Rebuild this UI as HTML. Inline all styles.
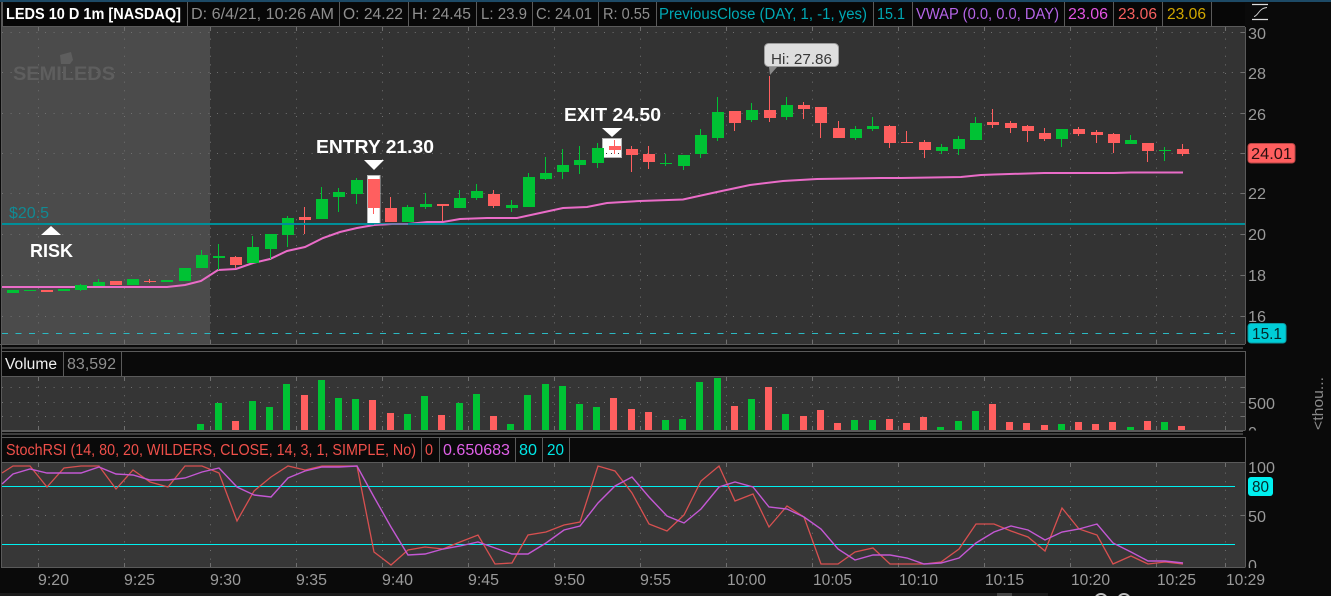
<!DOCTYPE html>
<html lang="en">
<head>
<meta charset="utf-8">
<title>LEDS 10 D 1m</title>
<style>
html,body{margin:0;padding:0;background:#0a0a0a;width:1331px;height:596px;overflow:hidden}
svg{display:block;position:absolute;left:0;top:0}
text{font-family:"Liberation Sans",sans-serif;font-size:15.5px}
.g{fill:#8f8f8f}
.ax{fill:#9a9a9a;font-size:16px}
.b{font-weight:bold;fill:#fff;font-size:18.5px}
.sep{stroke:#5a5a5a;stroke-width:1}
.dot{stroke:#707070;stroke-width:1;stroke-dasharray:1 7.6;fill:none}
.tick{stroke:#6f6f6f;stroke-width:1}
</style>
</head>
<body>
<svg width="1331" height="596" viewBox="0 0 1331 596" xmlns="http://www.w3.org/2000/svg">
<rect width="1331" height="596" fill="#0a0a0a"/>
<rect x="0" y="0" width="1331" height="2" fill="#1d4a66"/>

<!-- main panel -->
<rect x="2" y="27" width="1243" height="317" fill="#333333"/>
<rect x="2" y="27" width="208" height="317" fill="#4b4b4b"/>

<!-- main grid -->
<g class="dot">
<path d="M2 32.5H1245M2 72.5H1245M2 113.5H1245M2 153.5H1245M2 193.5H1245M2 234.5H1245M2 275.5H1245M2 316.5H1245"/>
<path d="M38.5 30V344M124.5 30V344M210.5 30V344M296.5 30V344M382.5 30V344M468.5 30V344M554.5 30V344M640.5 30V344M726.5 30V344M812.5 30V344M898.5 30V344M984.5 30V344M1070.5 30V344M1156.5 30V344M1225.5 30V344"/>
</g>
<g class="tick" shape-rendering="crispEdges">
<path d="M38.5 27v4M124.5 27v4M210.5 27v4M296.5 27v4M382.5 27v4M468.5 27v4M554.5 27v4M640.5 27v4M726.5 27v4M812.5 27v4M898.5 27v4M984.5 27v4M1070.5 27v4M1156.5 27v4M1225.5 27v4"/>
<path d="M38.5 340v4M124.5 340v4M210.5 340v4M296.5 340v4M382.5 340v4M468.5 340v4M554.5 340v4M640.5 340v4M726.5 340v4M812.5 340v4M898.5 340v4M984.5 340v4M1070.5 340v4M1156.5 340v4M1225.5 340v4"/>
<path d="M1241 32.5h4M1241 72.5h4M1241 113.5h4M1241 153.5h4M1241 193.5h4M1241 234.5h4M1241 275.5h4M1241 316.5h4"/>
</g>

<!-- logo -->
<path d="M60 55l11-3 2 8-3 4-9 0z" fill="#5e5e5e"/>
<text x="13" y="80" textLength="102" lengthAdjust="spacingAndGlyphs" style="font-weight:bold;font-size:19px" fill="#5e5e5e">SEMILEDS</text>

<!-- header strip -->
<rect x="2" y="3" width="1243" height="23" fill="#070707"/>
<path d="M2 26.5H1245" stroke="#5a5a5a"/>
<g class="sep" shape-rendering="crispEdges">
<path d="M187.5 2V26M339.5 2V26M408.5 2V26M476.5 2V26M532.5 2V26M598.5 2V26M656.5 2V26M873.5 2V26M912.5 2V26M1064.5 2V26M1113.5 2V26M1162.5 2V26M1211.5 2V26M2.5 2V26"/>
</g>
<text x="6" y="19" textLength="175" lengthAdjust="spacingAndGlyphs" style="font-weight:bold" fill="#fff">LEDS 10 D 1m [NASDAQ]</text>
<text x="191" y="19" textLength="143" lengthAdjust="spacingAndGlyphs" class="g">D: 6/4/21, 10:26 AM</text>
<text x="343" y="19" textLength="60" lengthAdjust="spacingAndGlyphs" class="g">O: 24.22</text>
<text x="412" y="19" textLength="59" lengthAdjust="spacingAndGlyphs" class="g">H: 24.45</text>
<text x="481" y="19" textLength="46" lengthAdjust="spacingAndGlyphs" class="g">L: 23.9</text>
<text x="536" y="19" textLength="56" lengthAdjust="spacingAndGlyphs" class="g">C: 24.01</text>
<text x="603" y="19" textLength="47" lengthAdjust="spacingAndGlyphs" class="g">R: 0.55</text>
<text x="659" y="19" textLength="208" lengthAdjust="spacingAndGlyphs" fill="#00a8b4">PreviousClose (DAY, 1, -1, yes)</text>
<text x="877" y="19" textLength="28" lengthAdjust="spacingAndGlyphs" fill="#00a8b4">15.1</text>
<text x="916" y="19" textLength="143" lengthAdjust="spacingAndGlyphs" fill="#b565e8">VWAP (0.0, 0.0, DAY)</text>
<text x="1068" y="19" textLength="40" lengthAdjust="spacingAndGlyphs" fill="#e255e2">23.06</text>
<text x="1118" y="19" textLength="39" lengthAdjust="spacingAndGlyphs" fill="#f76060">23.06</text>
<text x="1167" y="19" textLength="39" lengthAdjust="spacingAndGlyphs" fill="#d2a800">23.06</text>

<!-- top right icon -->
<path d="M1252 4.5h16M1252 19.5h16" stroke="#dcdcdc" stroke-width="1.2" fill="none"/>
<path d="M1254 16.5C1258 16 1259 8 1267 7.5" stroke="#cfcfcf" stroke-width=".9" fill="none"/>

<!-- axis labels main -->
<g>
<text class="ax" x="1248" y="39" textLength="18" lengthAdjust="spacingAndGlyphs">30</text>
<text class="ax" x="1248" y="79" textLength="18" lengthAdjust="spacingAndGlyphs">28</text>
<text class="ax" x="1248" y="120" textLength="18" lengthAdjust="spacingAndGlyphs">26</text>
<text class="ax" x="1248" y="159" textLength="18" lengthAdjust="spacingAndGlyphs">24</text>
<text class="ax" x="1248" y="199" textLength="18" lengthAdjust="spacingAndGlyphs">22</text>
<text class="ax" x="1248" y="240" textLength="18" lengthAdjust="spacingAndGlyphs">20</text>
<text class="ax" x="1248" y="281" textLength="18" lengthAdjust="spacingAndGlyphs">18</text>
<text class="ax" x="1248" y="322" textLength="18" lengthAdjust="spacingAndGlyphs">16</text>
</g>
<rect x="1248" y="143.5" width="47" height="19.5" rx="3" fill="#ff5f5f" stroke="#b84545"/>
<text x="1251" y="159" textLength="41" lengthAdjust="spacingAndGlyphs" style="font-size:16px" fill="#2a1010">24.01</text>
<rect x="1248" y="323.5" width="38" height="19.5" rx="3" fill="#00ced8" stroke="#0a9aa2"/>
<text x="1252" y="339" textLength="30" lengthAdjust="spacingAndGlyphs" style="font-size:16px" fill="#04282a">15.1</text>

<!-- highlights -->
<rect x="367.5" y="175.5" width="12.5" height="48" fill="#fff" stroke="#b5b5b5"/>
<rect x="602.5" y="138.5" width="19" height="19" fill="#fff" stroke="#b5b5b5"/>
<path d="M606 153h1v1h-1zM611 153h1v1h-1zM618 153h1v1h-1z" fill="#333"/>

<!-- reference lines -->
<path d="M2 333.5H1235" stroke="#2bb8c2" stroke-width="1" stroke-dasharray="6 7.5" fill="none"/>

<!-- vwap -->
<polyline fill="none" stroke="#ea6cc8" stroke-width="2" points="2,287 167,287 185,285 201,281 218,270 236,269 253,263 270,259 287,251 305,247 323,238 340,232 357,228 374,225 392,224 408,224 427,222 443,222 460,219 487,218 517,218 540,213 563,208 587,207 607,203 640,201 683,199.5 717,192 750,185 783,181 817,179 881,178 901,178 961,177 981,175 994,174.5 1044,173 1114,173 1131,172.5 1183,172.5"/>

<!-- candles -->
<g shape-rendering="crispEdges">
<path fill="#00c234" d="M7 290h12v3h-12zM24 290h12v1h-12zM58 289h12v2h-12zM75 285h12v5h-12zM80 284h1v7h-1zM93 282h12v4h-12zM98 279h1v3h-1zM127 279h12v6h-12zM161 280h12v2h-12zM179 268h12v13h-12zM196 255h12v13h-12zM201 250h1v5h-1zM213 256h12v2h-12zM218 244h1v26h-1zM247 247h12v16h-12zM252 236h1v11h-1zM265 234h12v15h-12zM270 249h1v10h-1zM282 218h12v17h-12zM287 216h1v31h-1zM316 199h12v20h-12zM321 187h1v12h-1zM333 192h12v5h-12zM338 188h1v24h-1zM351 180h12v14h-12zM356 178h1v26h-1zM402 207h12v15h-12zM407 205h1v2h-1zM420 204h12v3h-12zM425 193h1v16h-1zM454 198h12v10h-12zM459 190h1v8h-1zM471 191h12v7h-12zM476 184h1v16h-1zM506 205h12v3h-12zM511 200h1v12h-1zM523 177h12v30h-12zM528 173h1v4h-1zM540 173h12v6h-12zM545 157h1v23h-1zM557 165h12v7h-12zM562 149h1v30h-1zM574 160h12v5h-12zM579 146h1v28h-1zM592 148h12v15h-12zM597 143h1v25h-1zM660 163h12v1h-12zM665 154h1v12h-1zM678 155h12v11h-12zM683 166h1v4h-1zM695 135h12v19h-12zM700 129h1v29h-1zM712 112h12v26h-12zM717 97h1v44h-1zM746 110h12v10h-12zM751 103h1v19h-1zM781 105h12v12h-12zM786 97h1v23h-1zM850 129h12v9h-12zM855 126h1v14h-1zM867 126h12v3h-12zM872 117h1v14h-1zM936 147h12v4h-12zM941 144h1v10h-1zM953 139h12v10h-12zM958 136h1v19h-1zM970 123h12v17h-12zM975 117h1v6h-1zM1056 129h12v10h-12zM1061 139h1v8h-1zM1125 140h12v4h-12zM1130 135h1v5h-1zM1159 150h12v1h-12zM1164 147h1v14h-1z"/>
<path fill="#ff5f5f" d="M41 290h12v2h-12zM110 281h12v4h-12zM144 281h12v1h-12zM149 279h1v4h-1zM230 257h12v8h-12zM235 256h1v12h-1zM299 217h12v3h-12zM304 207h1v27h-1zM368 179h12v29h-12zM373 208h1v6h-1zM385 208h12v14h-12zM390 197h1v11h-1zM437 204h12v2h-12zM442 206h1v15h-1zM488 194h12v12h-12zM493 190h1v18h-1zM609 146h12v4h-12zM614 140h1v14h-1zM626 149h12v6h-12zM631 146h1v26h-1zM643 154h12v8h-12zM648 146h1v23h-1zM729 111h12v12h-12zM734 123h1v8h-1zM764 110h12v8h-12zM769 76h1v46h-1zM798 105h12v4h-12zM803 102h1v17h-1zM815 107h12v16h-12zM820 123h1v15h-1zM833 128h12v10h-12zM838 121h1v7h-1zM884 126h12v17h-12zM889 125h1v23h-1zM901 142h12v1h-12zM906 131h1v12h-1zM919 142h12v8h-12zM924 140h1v18h-1zM987 122h12v3h-12zM992 109h1v19h-1zM1005 123h12v5h-12zM1010 121h1v12h-1zM1022 126h12v5h-12zM1027 125h1v17h-1zM1039 133h12v6h-12zM1044 128h1v13h-1zM1073 129h12v5h-12zM1078 127h1v9h-1zM1091 132h12v3h-12zM1096 130h1v13h-1zM1108 134h12v9h-12zM1113 133h1v20h-1zM1142 143h12v8h-12zM1147 151h1v11h-1zM1177 149h12v5h-12zM1182 144h1v12h-1z"/>
</g>

<!-- price level -->
<rect x="2" y="223" width="1243" height="2" fill="#008f99"/>
<polyline fill="none" stroke="#e866c8" stroke-width="1.2" points="374,225 392,224 408,224" opacity=".8"/>

<!-- annotations -->
<text x="9" y="218" textLength="40" lengthAdjust="spacingAndGlyphs" style="font-size:16px" fill="#118a94">$20.5</text>
<path d="M51 226l10 9H41z" fill="#fff"/>
<text class="b" x="30" y="257" textLength="43" lengthAdjust="spacingAndGlyphs">RISK</text>
<path d="M364 160h20l-10 10z" fill="#fff"/>
<text class="b" x="316" y="153" textLength="118" lengthAdjust="spacingAndGlyphs">ENTRY 21.30</text>
<path d="M602 128h20l-10 9z" fill="#fff"/>
<text class="b" x="564" y="121" textLength="97" lengthAdjust="spacingAndGlyphs">EXIT 24.50</text>

<!-- Hi bubble -->
<path d="M769 67h8l-7 8z" fill="#8a8a8a"/>
<rect x="764.5" y="43.5" width="74" height="23" rx="4" fill="#dedede" stroke="#9d9d9d"/>
<text x="771" y="64" textLength="61" lengthAdjust="spacingAndGlyphs" style="font-size:15px" fill="#383838">Hi: 27.86</text>

<!-- panel separators -->
<g shape-rendering="crispEdges">
<rect x="0" y="344" width="1245" height="1" fill="#5a5a5a"/>
<rect x="2" y="347" width="1241" height="2" fill="#3e3e3e"/>
<rect x="2" y="431" width="1241" height="1" fill="#5a5a5a"/>
<rect x="2" y="433" width="1241" height="2" fill="#3e3e3e"/>
<rect x="1" y="2" width="1" height="566" fill="#5a5a5a"/>
<rect x="1245" y="27" width="1" height="317" fill="#5a5a5a"/>
</g>

<!-- volume -->
<rect x="2" y="377" width="1243" height="53" fill="#353535"/>
<g class="dot">
<path d="M2 387.5H1245M2 402.5H1245M2 416.5H1245"/>
<path d="M38.5 378V430M124.5 378V430M210.5 378V430M296.5 378V430M382.5 378V430M468.5 378V430M554.5 378V430M640.5 378V430M726.5 378V430M812.5 378V430M898.5 378V430M984.5 378V430M1070.5 378V430M1156.5 378V430M1225.5 378V430"/>
</g>
<path d="M2 351.5H1245.5V430.5M2 376.5H1245M2 430.5H1245M63.5 352V376M121.5 352V376" class="sep" fill="none" shape-rendering="crispEdges"/>
<g class="tick" shape-rendering="crispEdges">
<path d="M38.5 377v4M124.5 377v4M210.5 377v4M296.5 377v4M382.5 377v4M468.5 377v4M554.5 377v4M640.5 377v4M726.5 377v4M812.5 377v4M898.5 377v4M984.5 377v4M1070.5 377v4M1156.5 377v4M1225.5 377v4"/>
<path d="M38.5 426v4M124.5 426v4M210.5 426v4M296.5 426v4M382.5 426v4M468.5 426v4M554.5 426v4M640.5 426v4M726.5 426v4M812.5 426v4M898.5 426v4M984.5 426v4M1070.5 426v4M1156.5 426v4M1225.5 426v4"/>
<path d="M1241 387.5h4M1241 402.5h4M1241 416.5h4"/>
</g>
<text x="5" y="369" textLength="52" lengthAdjust="spacingAndGlyphs" fill="#f0f0f0">Volume</text>
<text x="67" y="369" textLength="49" lengthAdjust="spacingAndGlyphs" class="g">83,592</text>
<g shape-rendering="crispEdges">
<path fill="#00c234" d="M197 424h7v6h-7zM215 403h7v27h-7zM249 401h7v29h-7zM266 407h7v23h-7zM283 384h7v46h-7zM318 380h7v50h-7zM335 398h7v32h-7zM352 399h7v31h-7zM404 414h7v16h-7zM421 396h7v34h-7zM456 403h7v27h-7zM473 394h7v36h-7zM507 424h7v6h-7zM524 395h7v35h-7zM542 384h7v46h-7zM559 386h7v44h-7zM576 404h7v26h-7zM593 407h7v23h-7zM662 420h7v10h-7zM679 419h7v11h-7zM696 382h7v48h-7zM714 378h7v52h-7zM748 399h7v31h-7zM782 414h7v16h-7zM851 420h7v10h-7zM869 420h7v10h-7zM937 427h7v3h-7zM955 421h7v9h-7zM972 411h7v19h-7zM1058 424h7v6h-7zM1127 427h7v3h-7zM1161 422h7v8h-7z"/>
<path fill="#ff5f5f" d="M232 421h7v9h-7zM301 395h7v35h-7zM369 400h7v30h-7zM387 413h7v17h-7zM438 415h7v15h-7zM490 416h7v14h-7zM610 398h7v32h-7zM628 409h7v21h-7zM645 412h7v18h-7zM731 406h7v24h-7zM765 387h7v43h-7zM800 416h7v14h-7zM817 410h7v20h-7zM834 423h7v7h-7zM886 419h7v11h-7zM903 423h7v7h-7zM920 417h7v13h-7zM989 404h7v26h-7zM1006 422h7v8h-7zM1023 423h7v7h-7zM1041 425h7v5h-7zM1075 422h7v8h-7zM1092 424h7v6h-7zM1109 422h7v8h-7zM1144 421h7v9h-7zM1178 426h7v4h-7z"/>
</g>
<text class="ax" x="1248" y="409" textLength="27" lengthAdjust="spacingAndGlyphs">500</text>
<svg x="1246" y="420" width="30" height="10.5"><text class="ax" x="2" y="18">0</text></svg>
<text transform="translate(1323,430) rotate(-90)" textLength="53" lengthAdjust="spacingAndGlyphs" style="font-size:15px" fill="#8a8a8a">&lt;thou...</text>

<!-- stoch -->
<rect x="2" y="463" width="1243" height="104" fill="#373737"/>
<g class="dot">
<path d="M2 515.5H1245"/>
<path d="M38.5 464V567M124.5 464V567M210.5 464V567M296.5 464V567M382.5 464V567M468.5 464V567M554.5 464V567M640.5 464V567M726.5 464V567M812.5 464V567M898.5 464V567M984.5 464V567M1070.5 464V567M1156.5 464V567M1225.5 464V567"/>
</g>
<path d="M1.5 437.5H1245.5V567.5M1.5 462.5H1245M1.5 567.5H1245M421.5 438V462M439.5 438V462M515.5 438V462M542.5 438V462M569.5 438V462" class="sep" fill="none" shape-rendering="crispEdges"/>
<g class="tick" shape-rendering="crispEdges">
<path d="M38.5 463v4M124.5 463v4M210.5 463v4M296.5 463v4M382.5 463v4M468.5 463v4M554.5 463v4M640.5 463v4M726.5 463v4M812.5 463v4M898.5 463v4M984.5 463v4M1070.5 463v4M1156.5 463v4M1225.5 463v4"/>
<path d="M38.5 563v4M124.5 563v4M210.5 563v4M296.5 563v4M382.5 563v4M468.5 563v4M554.5 563v4M640.5 563v4M726.5 563v4M812.5 563v4M898.5 563v4M984.5 563v4M1070.5 563v4M1156.5 563v4M1225.5 563v4"/>
<path d="M1241 515.5h4"/>
</g>
<path d="M2 486.5H1235M2 544.5H1235" stroke="#00f0f0" stroke-width="1" fill="none" shape-rendering="crispEdges"/>
<polyline fill="none" stroke="#d85050" stroke-width="1.3" points="2,473 13,466 30,466 47,487 64,468 81,466 99,466 116,489 133,470 150,482 168,487 185,466 202,466 219,473 237,521 254,491 271,477 288,466 305,470 322,466 339,466 357,466 374,552 391,565 408,550 425,547 443,549 460,542 478,535 495,564 512,563 528,535 546,532 564,525 580,522 598,466 615,471 632,493 649,524 667,531 684,515 701,481 719,466 735,501 753,494 769,527 787,506 804,517 821,564 838,564 855,552 873,548 890,564 907,564 924,564 941,562 959,549 976,524 994,524 1011,531 1028,537 1045,551 1062,508 1079,529 1097,535 1113,564 1131,556 1148,564 1165,562 1183,564"/>
<polyline fill="none" stroke="#c458d4" stroke-width="1.4" points="2,484 13,474 30,469 47,473 64,473 81,473 99,467 116,474 133,475 150,480 168,480 185,478 202,472 219,468 237,487 254,495 271,497 288,478 305,471 322,467 339,467 357,466 374,497 391,527 408,555 425,554 443,549 460,546 478,542 495,548 512,554 528,554 546,543 564,530 580,526 598,503 615,486 632,477 649,497 667,516 684,523 701,509 719,487 735,482 753,487 769,507 787,509 804,517 821,529 838,549 855,560 873,555 890,555 907,558 924,564 941,563 959,558 976,543 994,532 1011,526 1028,530 1045,540 1062,532 1079,529 1097,524 1113,543 1131,552 1148,561 1165,561 1183,563"/>
<text x="6" y="455" textLength="410" lengthAdjust="spacingAndGlyphs" fill="#f0504a">StochRSI (14, 80, 20, WILDERS, CLOSE, 14, 3, 1, SIMPLE, No)</text>
<text x="425" y="455" textLength="8" lengthAdjust="spacingAndGlyphs" fill="#f0504a">0</text>
<text x="443" y="455" textLength="67" lengthAdjust="spacingAndGlyphs" fill="#e060e8">0.650683</text>
<text x="519" y="455" textLength="18" lengthAdjust="spacingAndGlyphs" fill="#00e8e8">80</text>
<text x="547" y="455" textLength="17" lengthAdjust="spacingAndGlyphs" fill="#00e8e8">20</text>

<text class="ax" x="1248" y="473" textLength="27" lengthAdjust="spacingAndGlyphs">100</text>
<rect x="1248" y="477" width="25" height="19" rx="3" fill="#00f0f0"/>
<text x="1252" y="492" textLength="17" lengthAdjust="spacingAndGlyphs" style="font-size:16px" fill="#042a2a">80</text>
<text class="ax" x="1248" y="522" textLength="18" lengthAdjust="spacingAndGlyphs">50</text>
<svg x="1246" y="550" width="30" height="18"><text class="ax" x="2" y="21">0</text></svg>

<!-- time labels -->
<g>
<text class="ax" x="38" y="585" textLength="31" lengthAdjust="spacingAndGlyphs">9:20</text>
<text class="ax" x="124" y="585" textLength="31" lengthAdjust="spacingAndGlyphs">9:25</text>
<text class="ax" x="210" y="585" textLength="31" lengthAdjust="spacingAndGlyphs">9:30</text>
<text class="ax" x="296" y="585" textLength="31" lengthAdjust="spacingAndGlyphs">9:35</text>
<text class="ax" x="382" y="585" textLength="31" lengthAdjust="spacingAndGlyphs">9:40</text>
<text class="ax" x="468" y="585" textLength="31" lengthAdjust="spacingAndGlyphs">9:45</text>
<text class="ax" x="554" y="585" textLength="31" lengthAdjust="spacingAndGlyphs">9:50</text>
<text class="ax" x="640" y="585" textLength="31" lengthAdjust="spacingAndGlyphs">9:55</text>
<text class="ax" x="727" y="585" textLength="39" lengthAdjust="spacingAndGlyphs">10:00</text>
<text class="ax" x="813" y="585" textLength="39" lengthAdjust="spacingAndGlyphs">10:05</text>
<text class="ax" x="899" y="585" textLength="39" lengthAdjust="spacingAndGlyphs">10:10</text>
<text class="ax" x="985" y="585" textLength="39" lengthAdjust="spacingAndGlyphs">10:15</text>
<text class="ax" x="1071" y="585" textLength="39" lengthAdjust="spacingAndGlyphs">10:20</text>
<text class="ax" x="1157" y="585" textLength="39" lengthAdjust="spacingAndGlyphs">10:25</text>
<text class="ax" x="1226" y="585" textLength="39" lengthAdjust="spacingAndGlyphs">10:29</text>
</g>

<!-- bottom bar -->
<rect x="0" y="593" width="1048" height="3" fill="#1b1b1b"/>
<rect x="997" y="593" width="15" height="3" fill="#454545"/>
<circle cx="1101" cy="600" r="6" fill="none" stroke="#bdbdbd" stroke-width="2"/>
<circle cx="1124" cy="600" r="6" fill="none" stroke="#bdbdbd" stroke-width="2"/>
</svg>
</body>
</html>
